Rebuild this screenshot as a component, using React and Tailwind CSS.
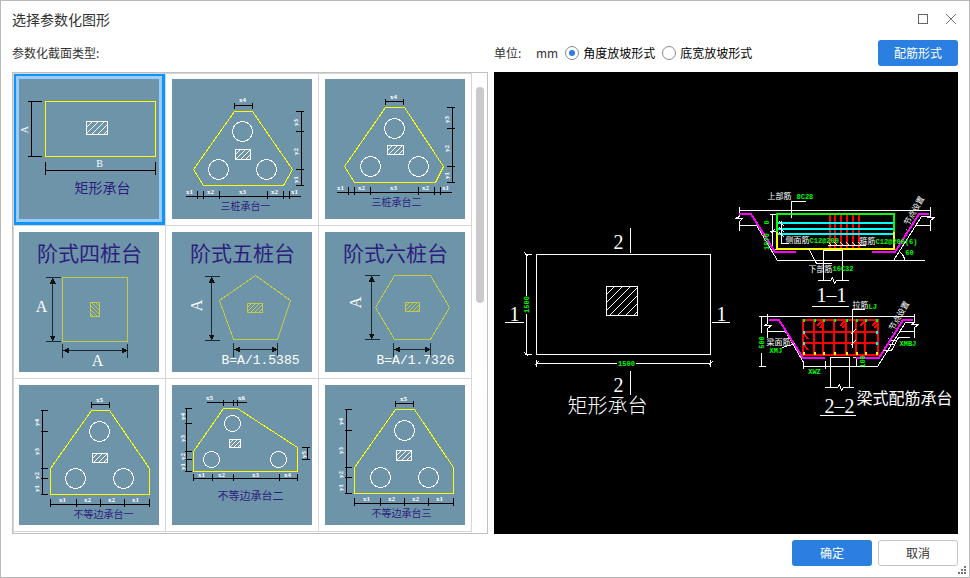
import React, { useState } from 'react';

const CJK = '"Noto Sans CJK SC", sans-serif';
const MONO = '"Liberation Mono", "Noto Sans CJK SC", monospace';
const SERIF = '"Liberation Serif", "Noto Sans CJK SC", serif';

/* ---------- drawing helpers ---------- */

// horizontal dimension line, with a tick at every x
function HDim({ y, xs, from, to, up = 6, down = 2 }) {
  const start = from ?? xs[0];
  const end = to ?? xs[xs.length - 1];
  const ticks = xs.map((x) => `M${x} ${y - up}V${y + down}`).join('');
  return <path d={`M${start} ${y}H${end}${ticks}`} stroke="#000" />;
}

// vertical dimension line, with a tick at every y
function VDim({ x, ys, left = 2, right = 5 }) {
  const ticks = ys.map((y) => `M${x - left} ${y}H${x + right}`).join('');
  return <path d={`M${x} ${ys[0]}V${ys[ys.length - 1]}${ticks}`} stroke="#000" />;
}

function Label({ x, y, rotate, size = 8, fill = '#fff', font = MONO, anchor = 'middle', weight, children }) {
  return (
    <text
      x={x}
      y={y}
      fontSize={size}
      fill={fill}
      stroke="none"
      fontFamily={font}
      fontWeight={weight}
      textAnchor={anchor}
      dominantBaseline="central"
      transform={rotate ? `rotate(${rotate} ${x} ${y})` : undefined}
    >
      {children}
    </text>
  );
}

function Green(props) {
  return <Label size={7} fill={GREEN} weight="700" {...props} />;
}

function Hatch({ x, y, w, h, color = '#fff', flip = false, step = 5 }) {
  let d = '';
  for (let c = step; c < w + h; c += step) {
    const x1 = Math.max(0, c - h);
    const y1 = Math.min(h, c);
    const x2 = Math.min(w, c);
    const y2 = Math.max(0, c - w);
    d += flip
      ? `M${x + w - x1} ${y + y1}L${x + w - x2} ${y + y2}`
      : `M${x + x1} ${y + y1}L${x + x2} ${y + y2}`;
  }
  return (
    <g stroke={color}>
      <rect x={x} y={y} width={w} height={h} />
      <path d={d} />
    </g>
  );
}

function Piles({ points, r = 10 }) {
  return points.map(([cx, cy]) => <circle key={`${cx}-${cy}`} cx={cx} cy={cy} r={r} stroke="#fff" />);
}

function Labels({ items, rotate }) {
  return items.map(([text, x, y]) => (
    <Label key={`${text}-${x}-${y}`} x={x} y={y} size={7} rotate={rotate} font={SERIF} weight="700">{text}</Label>
  ));
}

function Title({ x, y, size, children }) {
  return <Label x={x} y={y} size={size} fill="#2c1f7c" font={CJK}>{children}</Label>;
}

function ArrowDims({ x, y1, y2, hy, hx1, hx2 }) {
  return (
    <g stroke="#1c2a33">
      <path d={`M${x} ${y1}V${y2}M${x - 7} ${y1}H${x + 8}M${x - 7} ${y2}H${x + 8}`} />
      <path d={`M${hx1} ${hy}H${hx2}M${hx1} ${hy - 7}V${hy + 7}M${hx2} ${hy - 7}V${hy + 7}`} />
      <g fill="#111" stroke="none">
        <path d={`M${x} ${y1}l3 6h-6zM${x} ${y2}l3 -6h-6z`} />
        <path d={`M${hx1} ${hy}l6 3v-6zM${hx2} ${hy}l-6 3v-6z`} />
      </g>
    </g>
  );
}

/* ---------- thumbnails, each on a 140 x 140 sheet ---------- */

function RectCap() {
  return (
    <>
      <rect x="26" y="22" width="110" height="55" stroke="#ff0" />
      <VDim x={12} ys={[22, 77]} left={4} right={10} />
      <HDim y={91} xs={[26, 136]} up={9} down={4} />
      <Hatch x={67} y={42} w={21} h={13} step={6} />
      <Label x={5} y={50} rotate={-90} size={10} font={SERIF}>A</Label>
      <Label x={80} y={84} size={10} font={SERIF}>B</Label>
      <Title x={83} y={107} size={14}>矩形承台</Title>
    </>
  );
}

function ThreePileOne() {
  return (
    <>
      <path d="M62 32H80L120 90L111 106H31L21 90Z" stroke="#ff0" />
      <Piles points={[[70, 52], [46, 90], [94, 90]]} />
      <Hatch x={63} y={70} w={15} h={10} />
      <HDim y={26} xs={[62, 80]} up={3} down={3} />
      <VDim x={129} ys={[32, 52, 90, 106]} left={6} right={2} />
      <HDim y={117} xs={[25, 31, 47, 95, 111, 117]} from={13} to={128} />
      <Labels items={[['x4', 70, 20], ['x1', 17, 112], ['x2', 38, 112], ['x3', 70, 112], ['x2', 102, 112], ['x1', 122, 112]]} />
      <Labels rotate={-90} items={[['y3', 123, 43], ['y2', 123, 72], ['y1', 123, 100]]} />
      <Title x={73} y={126} size={10}>三桩承台一</Title>
    </>
  );
}

function ThreePileTwo() {
  return (
    <>
      <path d="M60 28H79L118 87L110 103H29L19 87Z" stroke="#ff0" />
      <Piles points={[[69, 49], [45, 87], [93, 87]]} />
      <Hatch x={62} y={66} w={16} h={9} />
      <HDim y={22} xs={[60, 78]} up={3} down={3} />
      <VDim x={127} ys={[28, 49, 87, 103]} left={6} right={2} />
      <HDim y={113} xs={[23, 29, 45, 93, 109, 115]} from={11} to={126} />
      <Labels items={[['x4', 68, 17], ['x1', 15, 108], ['x2', 36, 108], ['x3', 68, 108], ['x2', 100, 108], ['x1', 120, 108]]} />
      <Labels rotate={-90} items={[['y3', 121, 40], ['y2', 121, 69], ['y1', 121, 96]]} />
      <Title x={71} y={122} size={10}>三桩承台二</Title>
    </>
  );
}

function StepFour() {
  return (
    <>
      <rect x="43" y="45" width="65" height="64" stroke="#c3cb45" />
      <ArrowDims x={33} y1={45} y2={109} hy={118} hx1={43} hx2={108} />
      <Hatch x={71} y={70} w={9} h={14} color="#c3cb45" flip step={4} />
      <Label x={22} y={74} size={16} font={SERIF}>A</Label>
      <Label x={78} y={128} size={16} font={SERIF}>A</Label>
      <Title x={70} y={19} size={21}>阶式四桩台</Title>
    </>
  );
}

function StepFive() {
  return (
    <>
      <path d="M83 43L118 68L105 107H61L47 68Z" stroke="#c3cb45" />
      <ArrowDims x={39} y1={44} y2={108} hy={117} hx1={61} hx2={105} />
      <Hatch x={75} y={71} w={15} h={9} color="#c3cb45" step={4} />
      <Label x={24} y={73} rotate={-90} size={16} font={SERIF}>A</Label>
      <Label x={49} y={128} size={13} anchor="start">B=A/1.5385</Label>
      <Title x={70} y={19} size={21}>阶式五桩台</Title>
    </>
  );
}

function StepSix() {
  return (
    <>
      <path d="M69 43H105L124 75L105 107H69L50 75Z" stroke="#c3cb45" />
      <ArrowDims x={46} y1={43} y2={107} hy={117} hx1={68} hx2={105} />
      <Hatch x={80} y={70} w={14} h={9} color="#c3cb45" step={4} />
      <Label x={30} y={70} rotate={-90} size={16} font={SERIF}>A</Label>
      <Label x={51} y={128} size={13} anchor="start">B=A/1.7326</Label>
      <Title x={70} y={19} size={21}>阶式六桩台</Title>
    </>
  );
}

function UnequalOne() {
  return (
    <>
      <path d="M72 25H90L130 83V109H31V83Z" stroke="#ff0" />
      <Piles points={[[80, 46], [56, 93], [104, 93]]} />
      <Hatch x={73} y={68} w={15} h={9} />
      <HDim y={19} xs={[72, 90]} up={3} down={3} />
      <VDim x={23} ys={[25, 46, 83, 93, 109]} />
      <HDim y={119} xs={[31, 57, 81, 105, 130]} />
      <Labels items={[['x5', 80, 14], ['x1', 43, 114], ['x2', 68, 114], ['x2', 92, 114], ['x1', 116, 114]]} />
      <Labels rotate={-90} items={[['y4', 17, 37], ['y3', 17, 66], ['y2', 17, 90], ['y1', 17, 103]]} />
      <Title x={84} y={128} size={10}>不等边承台一</Title>
    </>
  );
}

function UnequalTwo() {
  return (
    <>
      <path d="M51 23H65L125 62V86H21V66Z" stroke="#ff0" />
      <Piles points={[[60, 38], [39, 74], [106, 74]]} r={8} />
      <Hatch x={57} y={54} w={11} h={8} step={4} />
      <HDim y={17} xs={[51, 61, 65]} from={34} to={74} up={3} down={3} />
      <VDim x={14} ys={[23, 38, 66, 74, 86]} />
      <VDim x={135} ys={[62, 74]} left={6} right={2} />
      <HDim y={93} xs={[21, 40, 61, 107, 125]} up={5} />
      <Labels items={[['x5', 37, 12], ['x6', 69, 12], ['x1', 29, 89], ['x2', 49, 89], ['x3', 83, 89], ['x4', 115, 89]]} />
      <Labels rotate={-90} items={[['y4', 10, 31], ['y3', 10, 53], ['y2', 10, 71], ['y1', 10, 81], ['y5', 131, 69]]} />
      <Title x={78} y={109} size={11}>不等边承台二</Title>
    </>
  );
}

function UnequalThree() {
  return (
    <>
      <path d="M70 24H89L128 82V108H29V82Z" stroke="#ff0" />
      <Piles points={[[79, 45], [55, 92], [103, 92]]} />
      <Hatch x={71} y={65} w={15} h={10} />
      <HDim y={18} xs={[70, 88]} up={3} down={3} />
      <VDim x={21} ys={[24, 45, 82, 92, 108]} />
      <HDim y={118} xs={[29, 55, 79, 103, 128]} />
      <Labels items={[['x5', 78, 13], ['x1', 41, 113], ['x2', 66, 113], ['x2', 90, 113], ['x1', 114, 113]]} />
      <Labels rotate={-90} items={[['y4', 15, 36], ['y3', 15, 65], ['y2', 15, 89], ['y1', 15, 102]]} />
      <Title x={76} y={127} size={10}>不等边承台三</Title>
    </>
  );
}

const SHAPES = [
  { id: 'rect', name: '矩形承台', Drawing: RectCap },
  { id: 'three-1', name: '三桩承台一', Drawing: ThreePileOne },
  { id: 'three-2', name: '三桩承台二', Drawing: ThreePileTwo },
  { id: 'step-4', name: '阶式四桩台', Drawing: StepFour },
  { id: 'step-5', name: '阶式五桩台', Drawing: StepFive },
  { id: 'step-6', name: '阶式六桩台', Drawing: StepSix },
  { id: 'unequal-1', name: '不等边承台一', Drawing: UnequalOne },
  { id: 'unequal-2', name: '不等边承台二', Drawing: UnequalTwo },
  { id: 'unequal-3', name: '不等边承台三', Drawing: UnequalThree },
];

/* ---------- main preview ---------- */

const GREEN = '#00ff00';
const GRID_X = [309, 320, 329, 340, 352, 362, 371, 382];

function PlanView() {
  return (
    <>
      <rect x="42" y="182" width="174" height="100" />
      <Hatch x={112} y={214} w={31} h={29} step={8} />
      <path d="M32 182V223M32 241V282M30 182H37M30 282H37M30 180l4 4M30 280l4 4" />
      <path d="M42 291H122M141 291H216M42 287V294M216 287V294M40 293l4 -4M214 293l4 -4" />
      <path d="M136 155V180M136 298V322M10 250H29M217 250H235" />
      <Green x={32} y={232} rotate={-90}>1500</Green>
      <Green x={132} y={291}>1500</Green>
      <Label x={124} y={169} size={20} font={SERIF}>2</Label>
      <Label x={124} y={312} size={20} font={SERIF}>2</Label>
      <Label x={20} y={241} size={20} font={SERIF}>1</Label>
      <Label x={227} y={241} size={20} font={SERIF}>1</Label>
      <Label x={113} y={332} size={20} font={CJK} weight="300">矩形承台</Label>
    </>
  );
}

function SectionOne() {
  return (
    <>
      {/* ground line with break marks */}
      <path d="M245 138H436M245 134V144l-4 2h7l-3 3V158M436 134V143l-3 2h7l-4 3V158" />
      <path d="M245 153H262L283 188H430M399 188L427 144H436M421 153H436" />
      <path d="M278 142V177M275 142H282M275 159H282M275 177H282M276 161l4 -4" />
      <path d="M406 180Q410 183 410 188" />

      {/* rebar */}
      <g strokeWidth="2" transform="translate(-0.5 -0.5)">
        <path d="M245 142H257L281 180H302M378 180H401L425 142H435" stroke="#f0f" />
        <path d="M336 142V177M341 142V177M347 142V177M353 142V177M359 142V177M365 142V177" stroke="#f00" />
        <path d="M283 151H400M283 157H400M283 162H400" stroke="#0ff" />
        <path d="M283 160V142H400V160" stroke={GREEN} />
        <path d="M283 160V177H400V160" stroke="#ff0" />
      </g>

      {/* column */}
      <path d="M329 208V178H348V208M323 208H336l2 -3l2 6l2 -3H354" />

      {/* leaders */}
      <path d="M297 145V129H311M287 148V171H294M285 149l5 5M285 155l5 5M285 160l5 5" />
      <path d="M333 173H371M334 170l4 4M340 170l4 4M346 170l4 4M352 170l4 4M358 170l4 4M364 170l4 4" />
      <path d="M314 176L322 191H337" />
      <Label x={273} y={123} size={8} font={CJK} anchor="start">上部筋</Label>
      <Green x={302} y={124} anchor="start">8C28</Green>
      <Label x={291} y={167} size={8} font={CJK} anchor="start">侧面筋</Label>
      <Green x={315} y={168} anchor="start">C12@200</Green>
      <Label x={365} y={168} size={8} font={CJK} anchor="start">箍筋</Label>
      <Green x={381} y={169} anchor="start">C12@200(6)</Green>
      <Label x={314} y={196} size={8} font={CJK} anchor="start">下部筋</Label>
      <Green x={338} y={196} anchor="start">16C32</Green>
      <Green x={415} y={180}>60</Green>
      <Green x={272} y={150} rotate={-90}>0</Green>
      <Green x={272} y={169} rotate={-90}>1070</Green>
      <Label x={419} y={138} rotate={-60} size={8} font={CJK}>节点设置</Label>
      <path d="M412 157l1 1M416 151l1 1" stroke="#0ff" />

      <Label x={337} y={222} size={20} font={SERIF}>1–1</Label>
      <path d="M317 234H354" />
    </>
  );
}

function SectionTwo() {
  return (
    <>
      <path d="M264 244H420M273 241V251l-3 2h7l-4 3V265M420 241V250l-3 2h7l-4 3V265" />
      <path d="M273 259H291L309 290M309 294H383L411 250H419M404 259H420" />
      <path d="M267 244V260M267 280V294M264 294H271M309 288V296M331 288V296M362 286V294M358 285H366" />

      <g strokeWidth="2" transform="translate(-0.5 -0.5)">
        <path d="M275 248H285L309 286H331M362 286H385L409 248H419" stroke="#f0f" />
        <path
          d="M309 248H384V283H309ZM309 260H384M309 271H384M320 248V283M329 248V283M340 248V283M352 248V283M362 248V283M371 248V283"
          stroke="#f00"
        />
        <path
          d="M323 254l5 -5M326 256l3 -4M346 254l5 -5M348 256l4 -4M366 254l5 -5M378 254l5 -5M380 256l4 -4M310 262l4 5M310 273l4 5"
          stroke="#f00"
        />
      </g>
      <g strokeWidth="3">
        <path d={GRID_X.map((x) => `M${x - 1} 248h2`).join('')} stroke={GREEN} />
        <path d={GRID_X.map((x) => `M${x - 1} 281h2`).join('')} stroke="#ff0" />
        <path d="M308 260h2M381 260h2M308 271h2M381 271h2" stroke="#0ff" />
      </g>

      <path d="M336 315V285H355V315M330 315H343l2 -3l2 6l2 -3H359" />

      <path d="M370 237H358V275M356 262l5 -5M356 273l5 -5" />
      <path d="M288 275L301 271M415 265H404L397 278H388M396 268H402M394 272H400" />
      <Label x={358} y={232} size={8} font={CJK} anchor="start">拉筋</Label>
      <Green x={374} y={234} anchor="start">LJ</Green>
      <Label x={272} y={269} size={8} font={CJK} anchor="start">梁面筋</Label>
      <Green x={275} y={278} anchor="start">XMJ</Green>
      <Green x={405} y={271} anchor="start">XMBJ</Green>
      <Green x={320} y={299}>XWZ</Green>
      <Green x={267} y={270} rotate={-90}>500</Green>
      <Green x={368} y={289} rotate={-90}>100</Green>
      <Label x={404} y={243} rotate={-60} size={8} font={CJK}>节点设置</Label>
      <path d="M398 260l1 1M394 266l1 1" stroke="#0ff" />

      <Label x={345} y={333} size={20} font={SERIF}>2–2</Label>
      <path d="M325 343H361" />
      <Label x={362} y={324} size={16} font={CJK} anchor="start">梁式配筋承台</Label>
    </>
  );
}

function Preview() {
  return (
    <svg viewBox="0 0 464 462" className="block h-full w-full" role="img" aria-label="矩形承台" fill="none" stroke="#fff" shapeRendering="crispEdges">
      <g transform="translate(0.5 0.5)">
        <PlanView />
        <SectionOne />
        <SectionTwo />
      </g>
    </svg>
  );
}

/* ---------- dialog ---------- */

function ShapeCell({ shape, selected, onSelect }) {
  const { Drawing, name } = shape;
  return (
    <div className="border-r border-b border-[#d6d6d6] pt-px pl-px">
      <button
        type="button"
        aria-label={name}
        aria-pressed={selected}
        onClick={onSelect}
        className={`block border-t-2 border-r-3 border-b-3 border-l-2 p-[3px] ${selected ? 'border-[#0d94ff] bg-[#99ccff]' : 'border-transparent'}`}
      >
        <svg viewBox="0 0 140 140" className="block size-[140px] bg-[#6e94aa]" fill="none" shapeRendering="crispEdges">
          <g transform="translate(0.5 0.5)">
            <Drawing />
          </g>
        </svg>
      </button>
    </div>
  );
}

function SlopeRadio({ value, current, onChange, children }) {
  return (
    <label className="flex items-center gap-1 text-black">
      <input
        type="radio"
        name="slope"
        value={value}
        checked={current === value}
        onChange={() => onChange(value)}
        className="grid size-3.5 appearance-none place-content-center rounded-full border border-[#8a8a8a] before:size-1.5 before:rounded-full before:content-[''] checked:before:bg-[#2b7fe0]"
      />
      {children}
    </label>
  );
}

function App() {
  const [selected, setSelected] = useState('rect');
  const [slope, setSlope] = useState('angle');

  return (
    <div className="relative flex h-screen flex-col border border-[#b9b9b9] bg-white px-[11px] font-['Noto_Sans_CJK_SC',sans-serif] text-xs text-[#333]">
      <header className="flex h-9 shrink-0 items-center justify-between">
        <h1 className="text-sm">选择参数化图形</h1>
        <div className="flex items-center gap-4">
          <button type="button" aria-label="最大化">
            <svg viewBox="0 0 12 12" className="block size-3" fill="none" stroke="#666" shapeRendering="crispEdges">
              <path d="M.5 1.5h9v9h-9z" />
            </svg>
          </button>
          <button type="button" aria-label="关闭">
            <svg viewBox="0 0 12 12" className="block size-3" fill="none" stroke="#777">
              <path d="M0 1l10 10M10 1L0 11" />
            </svg>
          </button>
        </div>
      </header>

      <div className="mt-0.5 mb-[5px] flex h-7 shrink-0 items-center gap-1.5">
        <p className="w-[476px] shrink-0">参数化截面类型:</p>
        <div className="flex flex-1 items-center justify-between">
          <div className="flex items-center gap-[7px]">
            <span className="w-[35px]">单位:</span>
            <span>mm</span>
            <SlopeRadio value="angle" current={slope} onChange={setSlope}>角度放坡形式</SlopeRadio>
            <SlopeRadio value="width" current={slope} onChange={setSlope}>底宽放坡形式</SlopeRadio>
          </div>
          <button type="button" className="h-[26px] w-20 rounded-[3px] bg-[#2b7fe0] text-white">配筋形式</button>
        </div>
      </div>

      <main className="flex min-h-0 flex-1 gap-1.5">
        <div className="flex w-[476px] shrink-0 justify-between overflow-hidden border border-[#c0c0c0]">
          <div className="grid grid-cols-[repeat(3,153px)] content-start shadow-[inset_1px_1px_0_#d6d6d6]">
            {SHAPES.map((shape) => (
              <ShapeCell
                key={shape.id}
                shape={shape}
                selected={selected === shape.id}
                onSelect={() => setSelected(shape.id)}
              />
            ))}
          </div>
          <div className="mt-3.5 mr-[3px] h-[216px] w-2 rounded-full bg-[#cacaca]" />
        </div>
        <div className="min-w-0 flex-1 bg-black">
          <Preview />
        </div>
      </main>

      <footer className="mt-1.5 mb-[11px] flex shrink-0 justify-end gap-1.5">
        <button type="button" className="h-[26px] w-20 rounded-[3px] bg-[#2b7fe0] text-white">确定</button>
        <button type="button" className="h-[26px] w-20 rounded-[3px] border border-[#c4c4c4] bg-white">取消</button>
      </footer>

      {/* resize grip */}
      <svg viewBox="0 0 8 8" className="absolute right-[3px] bottom-[3px] size-2" fill="#777" shapeRendering="crispEdges">
        <path d="M6 0h2v2h-2zM3 3h2v2h-2zM6 3h2v2h-2zM0 6h2v2h-2zM3 6h2v2h-2zM6 6h2v2h-2z" />
      </svg>
    </div>
  );
}

export default App;
